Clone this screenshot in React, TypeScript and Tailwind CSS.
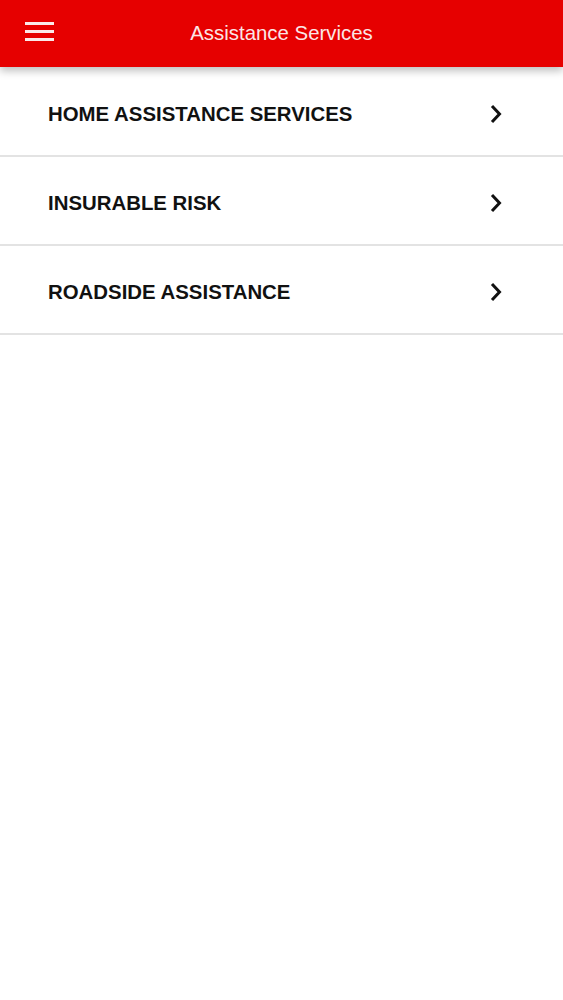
import React from "react";

const items = ["HOME ASSISTANCE SERVICES", "INSURABLE RISK", "ROADSIDE ASSISTANCE"];

function Chevron() {
  return (
    <svg width="14" height="20" viewBox="0 0 14 20" className="block">
      <path d="M3 2 L10.5 10 L3 18" fill="none" stroke="#111" strokeWidth="3" strokeLinecap="butt" strokeLinejoin="miter" />
    </svg>
  );
}

export default function App() {
  return (
    <div className="min-h-[1000px] w-full bg-white" style={{ fontFamily: '"Liberation Sans", Arial, sans-serif' }}>
      <header className="relative z-10 flex h-[67px] items-center bg-[#e60000] shadow-[0_4px_8px_rgba(0,0,0,0.25)]">
        <div className="absolute left-[25px] top-[22px] flex w-[29px] flex-col gap-[5px]">
          <span className="block h-[3px] w-full bg-[#fbe9e9]" />
          <span className="block h-[3px] w-full bg-[#fbe9e9]" />
          <span className="block h-[3px] w-full bg-[#fbe9e9]" />
        </div>
        <h1 className="w-full text-center text-[20.4px] leading-none text-[#fbe6e6]">Assistance Services</h1>
      </header>
      <ul className="mt-[1px]">
        {items.map((t) => (
          <li key={t} className="flex h-[89px] items-center justify-between border-b-2 border-[#e3e3e3] pl-[48px] pr-[60px] pt-[5px]">
            <span className="text-[20.4px] font-bold leading-none text-[#111]">{t}</span>
            <Chevron />
          </li>
        ))}
      </ul>
    </div>
  );
}
